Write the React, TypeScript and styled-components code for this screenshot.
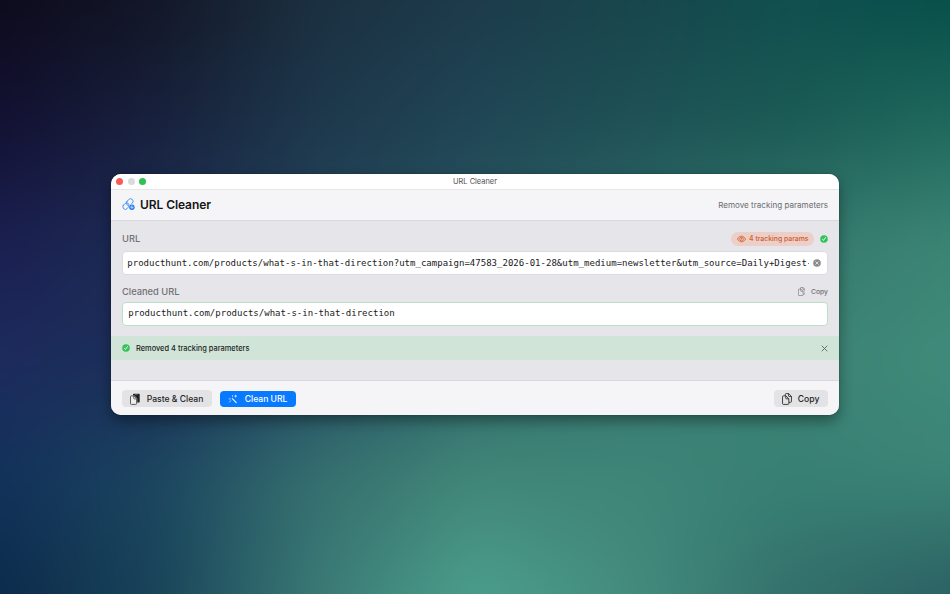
import React from 'react';
import styled, { createGlobalStyle } from 'styled-components';

const sans = `Inter, "Liberation Sans", sans-serif`;
const mono = `"DejaVu Sans Mono", "Liberation Mono", monospace`;

const GlobalStyle = createGlobalStyle`
  *, *::before, *::after { box-sizing: border-box; }
  body { margin: 0; overflow: hidden; font-family: ${sans}; }
`;

const Desktop = styled.main`
  position: relative;
  height: 594px;
  width: 950px;
  padding: 173.5px 111px 0;
  overflow: hidden;
  isolation: isolate;
`;

/* The wallpaper overscans the desktop so its blur never reveals an edge. */
const OVERSCAN = 60;
const STEP = 950 / 6;

const Wallpaper = styled.div`
  position: absolute;
  inset: -${OVERSCAN}px;
  z-index: -1;
  background: #0d0c1d;
  filter: blur(20px);
`;

const Band = styled.div<{ $colors: string[]; $from: number; $to: number }>`
  position: absolute;
  inset: 0;
  background: linear-gradient(
    to right,
    ${p => p.$colors.map((c, i) => `${c} ${(OVERSCAN + i * STEP).toFixed(1)}px`).join(', ')}
  );
  mask-image: linear-gradient(
    to bottom,
    transparent ${p => p.$from + OVERSCAN}px,
    #000 ${p => p.$to + OVERSCAN}px
  );
`;

const bands = [
  { from: -61, to: -60, colors: ['#0d0b1c', '#131727', '#1b3040', '#1d3b4b', '#18464c', '#104f4e', '#074f4a'] },
  { from: 0, to: 120, colors: ['#131133', '#18213d', '#1e384c', '#204655', '#1f5156', '#1b5b55', '#1f685c'] },
  { from: 120, to: 240, colors: ['#1b1f50', '#1d2d54', '#23455b', '#29555f', '#2e6967', '#36786e', '#3c8574'] },
  { from: 240, to: 360, colors: ['#1d2b5e', '#1b3058', '#254f67', '#2f6a6c', '#397a72', '#3d8375', '#3f8b7a'] },
  { from: 360, to: 480, colors: ['#12325a', '#1c4660', '#36706f', '#428778', '#3f8578', '#388074', '#3b8376'] },
  { from: 480, to: 594, colors: ['#0c2b4b', '#194459', '#3a7975', '#4c9f8c', '#448b7e', '#33706b', '#2b6063'] },
];

const Window = styled.section`
  height: 241.5px;
  border-radius: 10px;
  overflow: hidden;
  display: flex;
  flex-direction: column;
  background: #e6e5ea;
  color: #1d1d1f;
  box-shadow: 0 0 1px rgba(0, 0, 0, 0.6), 0 6px 14px rgba(0, 0, 0, 0.38);
`;

const TitleBar = styled.header`
  display: grid;
  grid-template-columns: 1fr auto 1fr;
  align-items: center;
  height: 16.5px;
  padding: 0.5px 5px 0;
  background: #fff;
  border-bottom: 1px solid #e6e6e8;
  font-size: 7.45px;
  color: #4f4f52;
`;

const Lights = styled.div`
  display: flex;
  gap: 4.5px;
`;

const Light = styled.span<{ $color: string }>`
  width: 7px;
  height: 7px;
  border-radius: 50%;
  background: ${p => p.$color};
`;

const Header = styled.div`
  display: flex;
  align-items: center;
  height: 30.5px;
  padding: 0 11px;
  background: #f5f5f7;
  border-bottom: 1px solid #d9d9dc;
`;

const Heading = styled.h1`
  flex: 1;
  margin: 0 0 0 5px;
  font-size: 12px;
  font-weight: 600;
  letter-spacing: -0.08px;
  color: #161618;
`;

const Tagline = styled.span`
  font-size: 8.1px;
  color: #6c6c70;
`;

const Body = styled.div`
  flex: 1;
  padding: 11px 11px 0;
`;

const LabelRow = styled.div<{ $output?: boolean }>`
  display: flex;
  align-items: center;
  height: 14px;
  margin: ${p => (p.$output ? '9.5px 0 4px' : '0 0 5px')};
`;

const Label = styled.label`
  flex: 1;
  font-size: 9.3px;
  font-weight: 500;
  color: #717175;
`;

const Badge = styled.span`
  display: flex;
  align-items: center;
  gap: 3px;
  height: 14px;
  padding: 0 5.5px 0 6px;
  margin-right: 6px;
  border-radius: 7px;
  background: #eccfc8;
  color: #cf5a29;
  font-size: 6.87px;
  font-weight: 500;
`;

const MiniCopy = styled.button`
  display: flex;
  align-items: center;
  gap: 5.5px;
  padding: 0;
  border: 0;
  background: none;
  font: 500 6.8px ${sans};
  color: #717175;
`;

const Field = styled.div<{ $ok?: boolean }>`
  display: flex;
  align-items: center;
  height: ${p => (p.$ok ? 23.5 : 24)}px;
  padding: 0 6px ${p => (p.$ok ? 1 : 0)}px ${p => (p.$ok ? 5.3 : 4.3)}px;
  border: 1px solid ${p => (p.$ok ? '#b9e0c6' : '#dcdce0')};
  border-radius: 4px;
  background: #fff;
  color: #1a1a1c;
  font: 9.04px ${mono};
`;

const UrlText = styled.span`
  white-space: nowrap;
`;

const MoreMark = styled.span`
  width: 1px;
  height: 1px;
  margin: 1px auto 0 0.8px;
  background: #77777a;
`;

const Banner = styled.div`
  display: flex;
  align-items: center;
  gap: 6px;
  height: 24px;
  margin: 10.5px -11px 0;
  padding: 0 11px;
  background: #d0e5d7;
  font-size: 7.43px;
  font-weight: 500;
`;

const BannerText = styled.span`
  flex: 1;
`;

const Footer = styled.footer`
  display: flex;
  align-items: center;
  gap: 8px;
  height: 35px;
  padding: 1px 11px 0;
  background: #f5f5f7;
  border-top: 1px solid #d9d9dc;
`;

const Button = styled.button<{ $primary?: boolean; $width: number }>`
  display: flex;
  align-items: center;
  justify-content: space-between;
  width: ${p => p.$width}px;
  height: ${p => (p.$primary ? 16 : 17)}px;
  padding: 0 8.6px 0 8px;
  border: 0;
  border-radius: 4px;
  background: ${p => (p.$primary ? '#087aff' : '#e3e3e5')};
  color: ${p => (p.$primary ? '#fff' : '#252527')};
  font: 500 8.6px ${sans};
  white-space: nowrap;
`;

const Spacer = styled.div`
  flex: 1;
`;

const LinkIcon = () => (
  <svg width="13" height="13" viewBox="0 0 13 13" fill="none" stroke="#3b8cf5" strokeWidth="0.85" strokeLinecap="round">
    <rect x="0.5" y="5.6" width="7" height="5" rx="2.5" transform="rotate(-48 4 8.1)" />
    <rect x="3.9" y="1.7" width="7.6" height="5" rx="2.5" transform="rotate(-48 7.7 4.2)" />
    <circle cx="9.9" cy="9.2" r="3.1" fill="#f5f5f7" stroke="none" />
    <circle cx="9.9" cy="9.2" r="2.7" fill="#2079ef" stroke="none" />
    <path d="M9.9 7.9v2.6M8.6 9.2h2.6" stroke="#eef4ff" strokeWidth="0.7" />
  </svg>
);

const EyeIcon = () => (
  <svg width="9" height="8" viewBox="0 0 9 8" fill="none" stroke="currentColor" strokeWidth="0.8">
    <path d="M.4 4C1.5 2.2 2.8 1.2 4.5 1.2S7.5 2.2 8.6 4C7.5 5.8 6.2 6.8 4.5 6.8S1.5 5.8.4 4Z" />
    <circle cx="4.5" cy="4" r="1.8" />
    <path d="M4.5 2.8v1.6" />
  </svg>
);

const CheckIcon = () => (
  <svg width="8" height="8" viewBox="0 0 8 8" fill="none">
    <circle cx="4" cy="4" r="3.8" fill="#34c25a" />
    <path d="m2.4 4.2 1.1 1.3 2-3" stroke="#fff" strokeWidth="0.8" strokeLinecap="round" strokeLinejoin="round" />
  </svg>
);

const ClearIcon = () => (
  <svg width="8" height="8" viewBox="0 0 8 8">
    <circle cx="4" cy="4" r="3.8" fill="#8b8b8e" />
    <path d="m2.7 2.7 2.6 2.6m0-2.6L2.7 5.3" stroke="#fff" strokeWidth="0.7" strokeLinecap="round" />
  </svg>
);

const CloseIcon = () => (
  <svg width="7" height="7" viewBox="0 0 7 7">
    <path d="m1 1 5 5m0-5L1 6" stroke="#5c665f" strokeWidth="0.9" strokeLinecap="round" />
  </svg>
);

const DocsIcon = ({ size = 12 }: { size?: number }) => (
  <svg width={size * 0.84} height={size} viewBox="0 0 10 12" fill="none" stroke="currentColor" strokeWidth="0.85" strokeLinejoin="round">
    <path d="M3.3 2.7V1.4c0-.5.3-.8.8-.8h2.6l2.7 2.8v5.1c0 .5-.3.8-.8.8H7" />
    <path d="M6.5.7v2.1c0 .5.2.7.7.7h2.1" />
    <path d="M1.4 2.8h2.4l3 3v4.7c0 .6-.3.9-.9.9H1.4c-.6 0-.9-.3-.9-.9V3.7c0-.6.3-.9.9-.9Z" />
    <path d="M3.7 2.9v2.2c0 .5.2.7.7.7h2.3" />
  </svg>
);

const PasteIcon = () => (
  <svg width="10" height="12" viewBox="0 0 10 12" fill="none">
    <path d="M3 2.6V1.7c0-.7.4-1 1-1h4.7c.7 0 1 .3 1 1v6.9c0 .7-.3 1-1 1H7.2V5.5L4.3 2.6Z" fill="#202022" />
    <path d="M5 1.4h2.6" stroke="#aaa" strokeWidth="0.5" />
    <path d="M1.4 2.9h2.4l2.8 2.9v4.7c0 .6-.3.9-.9.9H1.4c-.6 0-.9-.3-.9-.9V3.8c0-.6.3-.9.9-.9Z" fill="#eee" stroke="#38383a" strokeWidth="0.8" />
    <path d="M3.7 3v2.2c0 .5.2.7.7.7h2.2" stroke="#38383a" strokeWidth="0.7" />
  </svg>
);

const WandIcon = () => (
  <svg width="10" height="10" viewBox="0 0 10 10" fill="none" stroke="#eaf3ff" strokeWidth="0.8" strokeLinecap="round">
    <path d="m4.4 4.7 3.8 3.9" strokeWidth="1.2" />
    <path d="M4.5 1.7v.7M1.2 4.9h1.1M1.4 8.1l1.3-1.4" />
    <path d="M7.6 1.2v1.9M6.7 2.1h1.9" strokeWidth="0.75" />
  </svg>
);

export default function App() {
  return (
    <Desktop>
      <GlobalStyle />
      <Wallpaper>
        {bands.map(b => (
          <Band key={b.to} $colors={b.colors} $from={b.from} $to={b.to} />
        ))}
      </Wallpaper>
      <Window>
        <TitleBar>
          <Lights>
            <Light $color="#f95a58" />
            <Light $color="#dadadb" />
            <Light $color="#30c151" />
          </Lights>
          URL Cleaner
        </TitleBar>
        <Header>
          <LinkIcon />
          <Heading>URL Cleaner</Heading>
          <Tagline>Remove tracking parameters</Tagline>
        </Header>
        <Body>
          <LabelRow>
            <Label>URL</Label>
            <Badge><EyeIcon />4 tracking params</Badge>
            <CheckIcon />
          </LabelRow>
          <Field>
            <UrlText>producthunt.com/products/what-s-in-that-direction?utm_campaign=47583_2026-01-28&amp;utm_medium=newsletter&amp;utm_source=Daily+Digest</UrlText>
            <MoreMark />
            <ClearIcon />
          </Field>
          <LabelRow $output>
            <Label>Cleaned URL</Label>
            <MiniCopy><DocsIcon size={9} />Copy</MiniCopy>
          </LabelRow>
          <Field $ok>
            <UrlText>producthunt.com/products/what-s-in-that-direction</UrlText>
          </Field>
          <Banner>
            <CheckIcon />
            <BannerText>Removed 4 tracking parameters</BannerText>
            <CloseIcon />
          </Banner>
        </Body>
        <Footer>
          <Button $width={90}><PasteIcon />Paste &amp; Clean</Button>
          <Button $width={76} $primary><WandIcon />Clean URL</Button>
          <Spacer />
          <Button $width={54}><DocsIcon />Copy</Button>
        </Footer>
      </Window>
    </Desktop>
  );
}
